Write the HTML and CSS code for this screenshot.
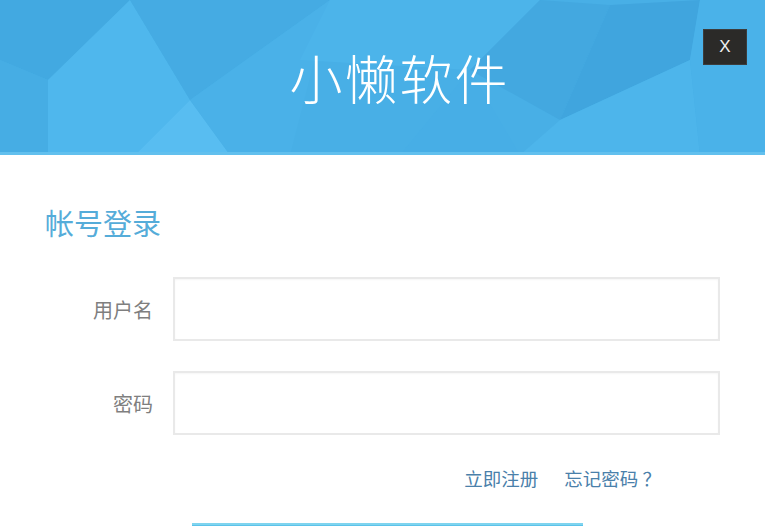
FILE: index.html
```html
<!DOCTYPE html>
<html lang="zh-CN">
<head>
    <meta charset="UTF-8">
    <meta name="viewport" content="width=device-width, initial-scale=1.0">
    <title>小懒软件 - 帐号登录</title>
    <link rel="stylesheet" href="styles.css">
</head>
<body>

    <div class="banner">
        <!-- low poly background -->
        <svg class="banner-bg" viewBox="0 0 765 155" preserveAspectRatio="none">
            <rect x="0" y="0" width="765" height="155" fill="#48afe6"/>
            <polygon points="0,0 130,0 48,80 0,60" fill="#42a9e1"/>
            <polygon points="0,60 48,80 48,155 0,155" fill="#46ade4"/>
            <polygon points="130,0 48,80 48,155 135,155 190,100" fill="#4fb7ed"/>
            <polygon points="130,0 330,0 190,100" fill="#45abe3"/>
            <polygon points="135,155 190,100 230,155" fill="#58bdf1"/>
            <polygon points="190,100 330,0 290,155 230,155" fill="#4ab1e8"/>
            <polygon points="330,0 540,0 470,70 300,60" fill="#4cb4ea"/>
            <polygon points="470,70 540,0 610,5 560,120" fill="#43a8e0"/>
            <polygon points="610,5 700,0 690,60 560,120" fill="#40a5de"/>
            <polygon points="560,120 690,60 700,155 520,155" fill="#4db5eb"/>
            <polygon points="700,0 765,0 765,155 700,155 690,60" fill="#4ab2e9"/>
            <polygon points="400,155 470,70 520,155" fill="#47aee6"/>
            <rect x="0" y="152" width="765" height="3" fill="#62c0ee"/>
        </svg>
        <h1 class="app-name">小懒软件</h1>
        <button class="close-btn">X</button>
    </div>

    <div class="login">
        <h2 class="login-title">帐号登录</h2>

        <div class="field">
            <label for="username">用户名</label>
            <input type="text" id="username">
        </div>
        <div class="field">
            <label for="password">密码</label>
            <input type="password" id="password">
        </div>

        <div class="links">
            <a href="#">立即注册</a>
            <a href="#">忘记密码 ？</a>
        </div>

        <button class="submit-btn" aria-label="登录"></button>
    </div>

</body>
</html>
```

FILE: styles.css
```css
body {
    margin: 0;
    padding: 0;
    background-color: #ffffff;
    font-family: 'Noto Sans CJK SC', 'Liberation Sans', sans-serif;
    overflow: hidden;
}

.banner {
    position: relative;
    height: 155px;
    display: flex;
    align-items: center;
    justify-content: center;
    padding-left: 34px;
    box-sizing: border-box;
}

.banner-bg {
    position: absolute;
    top: 0;
    left: 0;
    width: 100%;
    height: 100%;
    z-index: 0;
}

.app-name {
    position: relative;
    margin: 0 0 2px 0;
    color: #ffffff;
    font-size: 53px;
    font-weight: 300;
    letter-spacing: 2px;
}

.close-btn {
    position: absolute;
    top: 29px;
    right: 18px;
    width: 44px;
    height: 36px;
    background-color: #2b2a28;
    color: #f0f0f0;
    border: 1px solid #3c3c3c;
    font-family: 'Liberation Sans', sans-serif;
    font-size: 17px;
    padding: 0;
    cursor: pointer;
}

.login {
    padding: 47px 0 0 0;
}

.login-title {
    margin: 0 0 35px 45px;
    color: #55acd9;
    font-size: 29px;
    font-weight: 400;
    line-height: 40px;
}

.field {
    display: flex;
    align-items: center;
    margin-bottom: 30px;
}

.field label {
    width: 173px;
    padding-right: 20px;
    text-align: right;
    box-sizing: border-box;
    color: #7f7f7f;
    font-size: 20px;
}

.field input {
    width: 547px;
    height: 64px;
    box-sizing: border-box;
    border: 2px solid #e9e9e9;
    box-shadow: inset 0 1px 2px rgba(0, 0, 0, 0.04);
    outline: none;
}

.links {
    display: flex;
    justify-content: flex-end;
    gap: 26px;
    padding-right: 104px;
    margin-top: 7px;
    line-height: 26px;
}

.links a {
    color: #4a80aa;
    font-size: 18.5px;
    text-decoration: none;
}

.submit-btn {
    display: block;
    margin: 32px 0 0 192px;
    width: 391px;
    height: 44px;
    background-color: #5cc3ea;
    border: none;
    border-top: 2px solid #7fd4ef;
}
```
